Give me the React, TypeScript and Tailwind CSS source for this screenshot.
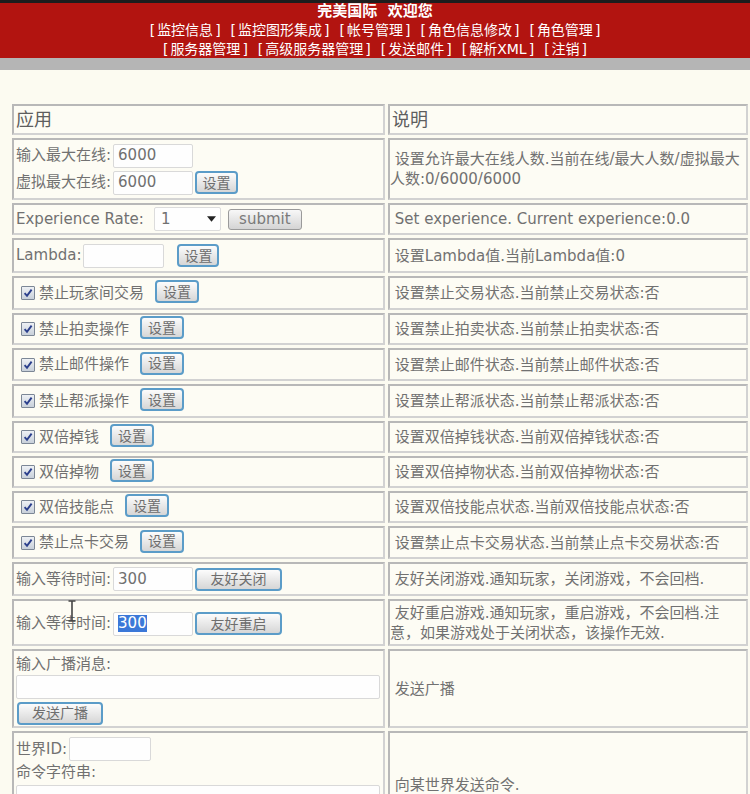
import React from "react";

const FONT = "font-['DejaVu_Sans','Noto_Sans_CJK_SC',sans-serif]";

function Btn({ children, w }: { children: React.ReactNode; w: string }) {
  return (
    <span
      className={`inline-flex items-center justify-center h-[23px] ${w} rounded-[4px] border-2 border-[#5b9cc8] bg-linear-to-b from-[#fcfcfc] to-[#d6d6d6] text-[#6e6e6e] text-[14px] leading-none shrink-0`}
    >
      {children}
    </span>
  );
}

function Box({ w, children }: { w: string; children?: React.ReactNode }) {
  return (
    <span
      className={`inline-flex items-center h-[24px] ${w} border border-[#d9d9d9] bg-[#fefefe] rounded-[2px] pl-[4px] text-[15px] text-[#707070] shrink-0`}
    >
      {children}
    </span>
  );
}

function Check() {
  return (
    <span className="inline-flex items-center justify-center w-[14px] h-[14px] border border-[#7c8796] bg-linear-to-b from-[#eef1f5] to-[#c8d0da] rounded-[1px] shrink-0">
      <svg viewBox="0 0 10 10" className="w-[10px] h-[10px]">
        <path d="M1.6 5.2 L4 7.8 L8.6 1.6" fill="none" stroke="#2b3f8c" strokeWidth="1.9" />
      </svg>
    </span>
  );
}

const tdCls =
  "border-2 border-t-[#b8b8b8] border-l-[#b8b8b8] border-r-[#d2d2d2] border-b-[#d2d2d2] p-0 align-middle bg-[#fdfcf4]";

function CheckRow({ label, h }: { label: string; h: string }) {
  return (
    <div className={`flex items-center ${h}`}>
      <span className="flex ml-[7px]">
        <Check />
      </span>
      <span className="ml-[4px]">{label}</span>
      <span className="flex ml-[11px] -mt-[3px]">
        <Btn w="w-[44px]">设置</Btn>
      </span>
    </div>
  );
}

function Desc({ children }: { children: React.ReactNode }) {
  return <div className="whitespace-nowrap leading-[20px]">{children}</div>;
}

export default function App() {
  const nav1 = ["监控信息", "监控图形集成", "帐号管理", "角色信息修改", "角色管理"];
  const nav2 = ["服务器管理", "高级服务器管理", "发送邮件", "解析XML", "注销"];
  const checks = [
    { l: "禁止拍卖操作", d: "设置禁止拍卖状态.当前禁止拍卖状态:否", h: "h-[32px]" },
    { l: "禁止邮件操作", d: "设置禁止邮件状态.当前禁止邮件状态:否", h: "h-[33px]" },
    { l: "禁止帮派操作", d: "设置禁止帮派状态.当前禁止帮派状态:否", h: "h-[34px]" },
    { l: "双倍掉钱", d: "设置双倍掉钱状态.当前双倍掉钱状态:否", h: "h-[32px]" },
    { l: "双倍掉物", d: "设置双倍掉物状态.当前双倍掉物状态:否", h: "h-[32px]" },
    { l: "双倍技能点", d: "设置双倍技能点状态.当前双倍技能点状态:否", h: "h-[32px]" },
    { l: "禁止点卡交易", d: "设置禁止点卡交易状态.当前禁止点卡交易状态:否", h: "h-[33px]" },
  ];

  return (
    <div className={`${FONT} min-h-[794px] w-[750px] bg-[#fcfbf1] text-[#717171] text-[15px] overflow-hidden`}>
      {/* header */}
      <div className="relative h-[58px] bg-[#b21410] text-white text-center pt-[2px]">
        <div className="absolute top-0 left-0 right-0 h-[3px] bg-[#1d1d1d]" />
        <div className="text-[15px] font-bold leading-[19px]">完美国际&nbsp;&nbsp;欢迎您</div>
        <div className="text-[14px] leading-[19px]">
          {nav1.map((t) => (
            <span key={t} className="mx-[3px]">
              <span className="px-[2px]">[</span>
              {t}
              <span className="px-[2px]">]</span>
            </span>
          ))}
        </div>
        <div className="text-[14px] leading-[19px]">
          {nav2.map((t) => (
            <span key={t} className="mx-[3px]">
              <span className="px-[2px]">[</span>
              {t}
              <span className="px-[2px]">]</span>
            </span>
          ))}
        </div>
      </div>
      <div className="h-[12px] bg-[#b5b5b5]" />

      <table className="ml-[9px] mt-[31px] border-separate border-spacing-[3px] w-[742px] table-fixed">
        <colgroup>
          <col className="w-[373px]" />
          <col className="w-[360px]" />
        </colgroup>
        <tbody>
          <tr>
            <td className={`${tdCls} h-[31px]`}>
              <span className="pl-[2px] text-[18px] text-[#5e5e5e]">应用</span>
            </td>
            <td className={`${tdCls} h-[31px]`}>
              <span className="pl-[2px] text-[18px] text-[#5e5e5e]">说明</span>
            </td>
          </tr>

          <tr>
            <td className={`${tdCls} h-[62px]`}>
              <div className="flex flex-col gap-[3px] pl-[2px]">
                <div className="flex items-center">
                  <span>输入最大在线:</span>
                  <span className="flex ml-[2px]">
                    <Box w="w-[80px]">6000</Box>
                  </span>
                </div>
                <div className="flex items-center">
                  <span>虚拟最大在线:</span>
                  <span className="flex ml-[2px]">
                    <Box w="w-[80px]">6000</Box>
                  </span>
                  <span className="flex ml-[2px]">
                    <Btn w="w-[43px]">设置</Btn>
                  </span>
                </div>
              </div>
            </td>
            <td className={`${tdCls} h-[62px]`}>
              <Desc>
                &nbsp;设置允许最大在线人数.当前在线/最大人数/虚拟最大
                <br />
                人数:0/6000/6000
              </Desc>
            </td>
          </tr>

          <tr>
            <td className={`${tdCls} h-[32px]`}>
              <div className="flex items-center pl-[2px]">
                <span>Experience Rate:</span>
                <span className="ml-[10px] inline-flex items-center justify-between w-[67px] h-[24px] bg-[#fefefe] border border-[#dcdcdc] rounded-[2px] pl-[6px] pr-[4px]">
                  <span>1</span>
                  <svg viewBox="0 0 10 6" className="w-[9px] h-[6px]">
                    <path d="M0 0 L10 0 L5 6 Z" fill="#222" />
                  </svg>
                </span>
                <span className="ml-[7px] inline-flex items-center justify-center w-[74px] h-[21px] rounded-[3px] border border-[#9a9a9a] bg-linear-to-b from-[#f8f8f8] to-[#d4d4d4] text-[#7a7a7a] leading-none">
                  submit
                </span>
              </div>
            </td>
            <td className={`${tdCls} h-[32px]`}>
              <Desc>&nbsp;Set experience. Current experience:0.0</Desc>
            </td>
          </tr>

          <tr>
            <td className={`${tdCls} h-[35px]`}>
              <div className="flex items-center pl-[2px]">
                <span>Lambda:</span>
                <span className="flex ml-[2px]">
                  <Box w="w-[81px]" />
                </span>
                <span className="flex ml-[13px]">
                  <Btn w="w-[42px]">设置</Btn>
                </span>
              </div>
            </td>
            <td className={`${tdCls} h-[35px]`}>
              <Desc>&nbsp;设置Lambda值.当前Lambda值:0</Desc>
            </td>
          </tr>

          <tr>
            <td className={`${tdCls} h-[34px]`}>
              <CheckRow label="禁止玩家间交易" h="h-[30px]" />
            </td>
            <td className={`${tdCls} h-[34px]`}>
              <Desc>&nbsp;设置禁止交易状态.当前禁止交易状态:否</Desc>
            </td>
          </tr>

          {checks.map((c) => (
            <tr key={c.l}>
              <td className={`${tdCls} ${c.h}`}>
                <CheckRow label={c.l} h="h-[28px]" />
              </td>
              <td className={`${tdCls} ${c.h}`}>
                <Desc>&nbsp;{c.d}</Desc>
              </td>
            </tr>
          ))}

          <tr>
            <td className={`${tdCls} h-[34px]`}>
              <div className="flex items-center pl-[2px]">
                <span>输入等待时间:</span>
                <span className="flex ml-[2px]">
                  <Box w="w-[80px]">300</Box>
                </span>
                <span className="flex ml-[2px]">
                  <Btn w="w-[87px]">友好关闭</Btn>
                </span>
              </div>
            </td>
            <td className={`${tdCls} h-[34px]`}>
              <Desc>&nbsp;友好关闭游戏.通知玩家，关闭游戏，不会回档.</Desc>
            </td>
          </tr>

          <tr>
            <td className={`${tdCls} h-[47px]`}>
              <div className="relative flex items-center pl-[2px] pt-[2px]">
                <span>输入等待时间:</span>
                <span className="flex ml-[2px]">
                  <Box w="w-[80px]">
                    <span className="bg-[#3b78d8] text-white leading-[17px]">300</span>
                  </Box>
                </span>
                <span className="flex ml-[2px]">
                  <Btn w="w-[87px]">友好重启</Btn>
                </span>
                <svg viewBox="0 0 8 22" className="absolute left-[54px] -top-[10px] w-[8px] h-[22px]">
                  <path d="M0.5 1 H7.5 M4 1 V21 M0.5 21 H7.5" stroke="#444" strokeWidth="1.6" fill="none" />
                </svg>
              </div>
            </td>
            <td className={`${tdCls} h-[47px]`}>
              <Desc>
                &nbsp;友好重启游戏.通知玩家，重启游戏，不会回档.注
                <br />
                意，如果游戏处于关闭状态，该操作无效.
              </Desc>
            </td>
          </tr>

          <tr>
            <td className={`${tdCls} h-[79px]`}>
              <div className="flex flex-col pl-[2px] pt-[1px]">
                <span className="leading-[20px]">输入广播消息:</span>
                <span className="flex mt-[1px]">
                  <Box w="w-[364px]" />
                </span>
                <span className="flex ml-[1px] mt-[3px]">
                  <Btn w="w-[86px]">发送广播</Btn>
                </span>
              </div>
            </td>
            <td className={`${tdCls} h-[79px]`}>
              <Desc>&nbsp;发送广播</Desc>
            </td>
          </tr>

          <tr>
            <td className={`${tdCls} h-[108px] align-top`}>
              <div className="flex flex-col pl-[2px] pt-[4px]">
                <div className="flex items-center">
                  <span>世界ID:</span>
                  <span className="flex ml-[2px]">
                    <Box w="w-[82px]" />
                  </span>
                </div>
                <span className="leading-[22px]">命令字符串:</span>
                <span className="flex mt-[2px]">
                  <Box w="w-[364px]" />
                </span>
              </div>
            </td>
            <td className={`${tdCls} h-[108px]`}>
              <Desc>&nbsp;向某世界发送命令.</Desc>
            </td>
          </tr>
        </tbody>
      </table>
    </div>
  );
}
